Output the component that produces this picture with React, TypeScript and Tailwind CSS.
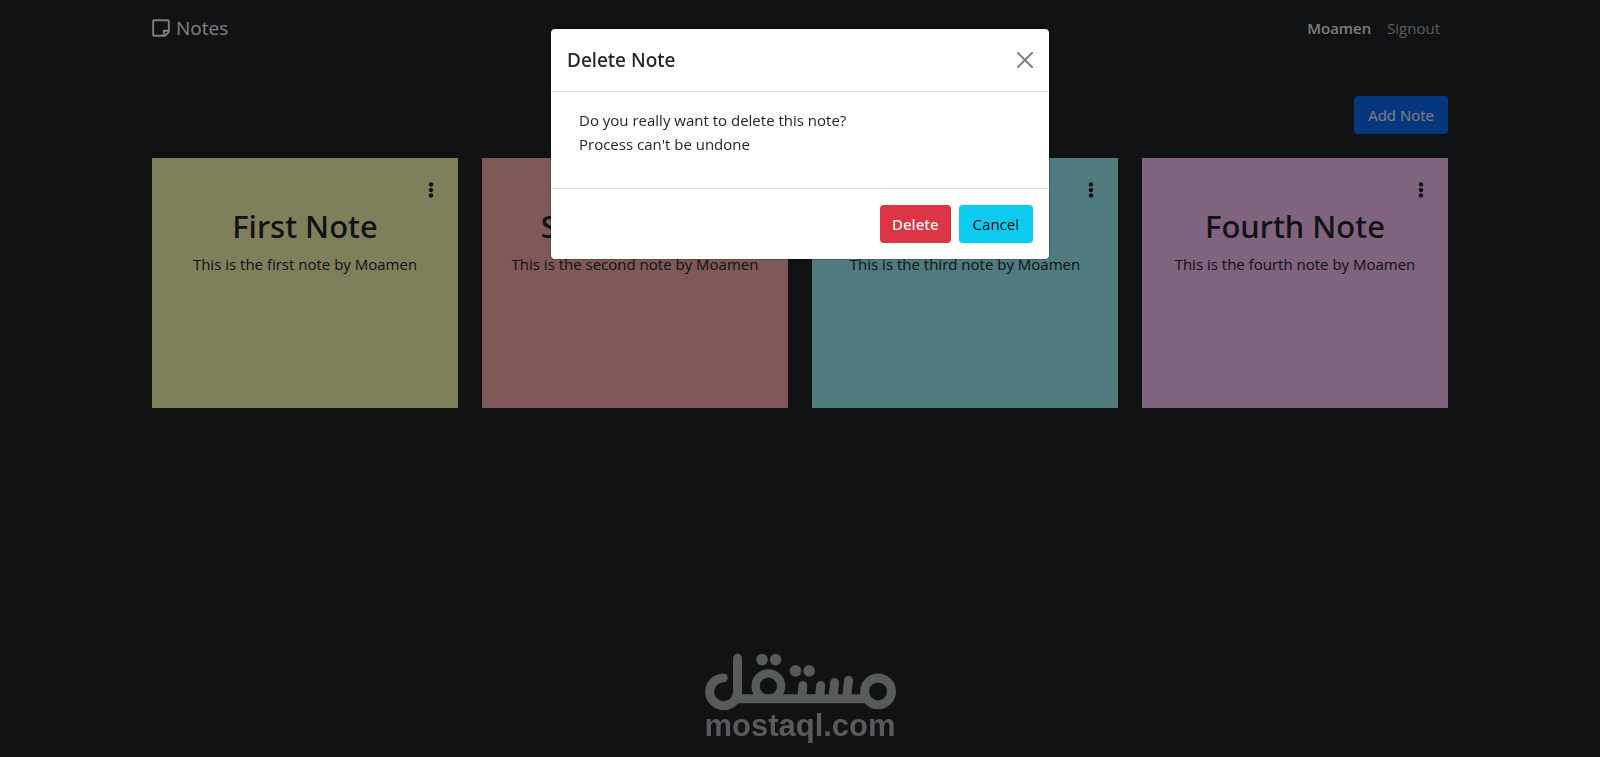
import { useState } from 'react'
import { FaEllipsisV, FaRegStickyNote } from 'react-icons/fa'

type Note = {
  title: string
  text: string
  color: string
}

const notes: Note[] = [
  { title: 'First Note', text: 'This is the first note by Moamen', color: 'bg-[#ffffb8]' },
  { title: 'Second Note', text: 'This is the second note by Moamen', color: 'bg-[#ffb0b0]' },
  { title: 'Third Note', text: 'This is the third note by Moamen', color: 'bg-[#9ef6ff]' },
  { title: 'Fourth Note', text: 'This is the fourth note by Moamen', color: 'bg-[#ffc7ff]' },
]

function Navbar() {
  return (
    <nav className="mx-auto flex h-14 max-w-[1320px] items-center justify-between px-3">
      <a href="#" className="flex items-center gap-1.5 text-[19px] leading-[30px] text-white">
        <FaRegStickyNote className="h-5 w-[18px]" />
        Notes
      </a>
      <div className="flex items-center">
        <a href="#profile" className="px-2 font-['Noto_Sans'] font-medium text-white">Moamen</a>
        <a href="#signout" className="px-2 text-white/65">Signout</a>
      </div>
    </nav>
  )
}

function NoteCard({ note }: { note: Note }) {
  return (
    <article className={`h-[250px] pt-5 text-center ${note.color}`}>
      <div className="flex h-6 items-center justify-end pr-[19px]">
        <button type="button" aria-label={`${note.title} options`}>
          <FaEllipsisV className="h-4 w-4" />
        </button>
      </div>
      <h2 className="mt-1 mb-1.5 font-['Noto_Sans'] text-[31px] leading-10 font-medium">{note.title}</h2>
      <p>{note.text}</p>
    </article>
  )
}

function DeleteModal({ onClose }: { onClose: () => void }) {
  return (
    <div className="fixed inset-0 z-10 bg-black/50 px-2 pt-7">
      <div
        role="dialog"
        aria-modal="true"
        aria-labelledby="delete-title"
        className="mx-auto max-w-[500px] rounded-[5px] border border-black/20 bg-white bg-clip-padding"
      >
        <div className="flex items-center justify-between border-b border-[#dee2e6] p-4">
          <h5 id="delete-title" className="font-['Noto_Sans'] text-[19px] leading-[30px] font-medium">Delete Note</h5>
          <button type="button" aria-label="Close" onClick={onClose} className="opacity-50">
            <svg className="h-4 w-4" viewBox="0 0 16 16" fill="#000">
              <path d="M.293.293a1 1 0 011.414 0L8 6.586 14.293.293a1 1 0 111.414 1.414L9.414 8l6.293 6.293a1 1 0 01-1.414 1.414L8 9.414l-6.293 6.293a1 1 0 01-1.414-1.414L6.586 8 .293 1.707a1 1 0 010-1.414z" />
            </svg>
          </button>
        </div>
        <div className="px-7 pt-4 pb-8">
          <p>
            Do you really want to delete this note?
            <br />
            Process can't be undone
          </p>
        </div>
        <div className="flex justify-end gap-2 border-t border-[#dee2e6] p-4">
          <button type="button" onClick={onClose} className="h-[38px] rounded bg-[#dc3545] px-3 font-['Noto_Sans'] font-medium text-white">
            Delete
          </button>
          <button type="button" onClick={onClose} className="h-[38px] rounded bg-[#0dcaf0] px-[14px] text-black">
            Cancel
          </button>
        </div>
      </div>
    </div>
  )
}

function Watermark() {
  return (
    <div className="pointer-events-none fixed inset-x-0 bottom-[15px] z-20 flex flex-col items-center text-[#585b5c]">
      <svg className="h-[57px] w-[193px]" viewBox="40 40 580 172" fill="none" stroke="currentColor" strokeWidth="27" role="img" aria-label="مستقل">
        <path d="M97 115A42 42 0 1 0 140 156V56" strokeLinecap="round" />
        <path d="M128 178H528" />
        <circle cx="233" cy="140" r="38.500" strokeWidth="25" />
        <circle cx="564" cy="156" r="40.500" />
        <g strokeLinecap="round">
          <path d="M337 138L334 175M391 138L387 175M433 129L428 175M475 122L469 175" />
        </g>
        <g fill="currentColor" stroke="none">
          <circle cx="214" cy="60" r="17.500" />
          <circle cx="255" cy="60" r="17.500" />
          <circle cx="315" cy="94" r="17.500" />
          <circle cx="356" cy="94" r="17.500" />
        </g>
      </svg>
      <span className="font-['Liberation_Sans'] text-[31px] leading-8 font-bold">mostaql.com</span>
    </div>
  )
}

export default function App() {
  const [open, setOpen] = useState(true)

  return (
    <div className="min-h-screen bg-[#212529] font-['Open_Sans',sans-serif] text-[15px] leading-6 text-[#212529]">
      <Navbar />
      <main className="mx-auto max-w-[1320px] px-3 pt-10">
        <div className="mb-6 flex justify-end">
          <button type="button" onClick={() => setOpen(true)} className="h-[38px] rounded bg-[#0d6efd] px-[14px] text-white">
            Add Note
          </button>
        </div>
        <div className="grid grid-cols-4 gap-6">
          {notes.map((note) => (
            <NoteCard key={note.title} note={note} />
          ))}
        </div>
      </main>
      {open && <DeleteModal onClose={() => setOpen(false)} />}
      <Watermark />
    </div>
  )
}
